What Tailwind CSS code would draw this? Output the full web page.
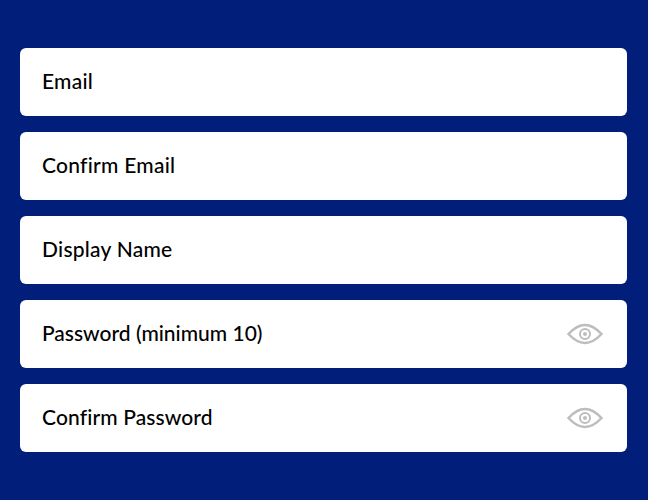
<!DOCTYPE html>
<html lang="en">
<head>
    <meta charset="UTF-8">
    <title>Sign Up</title>
    <script src="https://cdn.jsdelivr.net/npm/@tailwindcss/browser@4"></script>
</head>
<body class="bg-[#001e7a] font-['Lato',sans-serif]">
    <form class="flex flex-col gap-[16px] pt-[48px] pl-[20px] pr-[21px]">
        <div class="flex items-center h-[68px] rounded-[6px] bg-white px-[22px] pb-[2px] text-[21px] font-medium tracking-[0.25px] text-black">Email</div>
        <div class="flex items-center h-[68px] rounded-[6px] bg-white px-[22px] pb-[2px] text-[21px] font-medium tracking-[0.25px] text-black">Confirm Email</div>
        <div class="flex items-center h-[68px] rounded-[6px] bg-white px-[22px] pb-[2px] text-[21px] font-medium tracking-[0.25px] text-black">Display Name</div>
        <div class="flex items-center justify-between h-[68px] rounded-[6px] bg-white pl-[22px] pr-[24px] text-[21px] font-medium text-black">
            <span class="pb-[2px]">Password (minimum 10)</span>
            <svg class="w-[36px] h-[24px]" viewBox="0 0 36 24" fill="none" stroke="#bdbdbd" stroke-width="2.5"><path d="M1.5 12C8 5 13 3 18 3s10 2 16.500 9C28 19 23 21 18 21S8 19 1.500 12z"/><circle cx="18" cy="12" r="5" stroke-width="2"/><circle cx="18" cy="12" r="2" fill="#bdbdbd" stroke="none"/></svg>
        </div>
        <div class="flex items-center justify-between h-[68px] rounded-[6px] bg-white pl-[22px] pr-[24px] text-[21px] font-medium tracking-[0.12px] text-black">
            <span class="pb-[2px]">Confirm Password</span>
            <svg class="w-[36px] h-[24px]" viewBox="0 0 36 24" fill="none" stroke="#bdbdbd" stroke-width="2.5"><path d="M1.5 12C8 5 13 3 18 3s10 2 16.500 9C28 19 23 21 18 21S8 19 1.500 12z"/><circle cx="18" cy="12" r="5" stroke-width="2"/><circle cx="18" cy="12" r="2" fill="#bdbdbd" stroke="none"/></svg>
        </div>
    </form>
</body>
</html>
